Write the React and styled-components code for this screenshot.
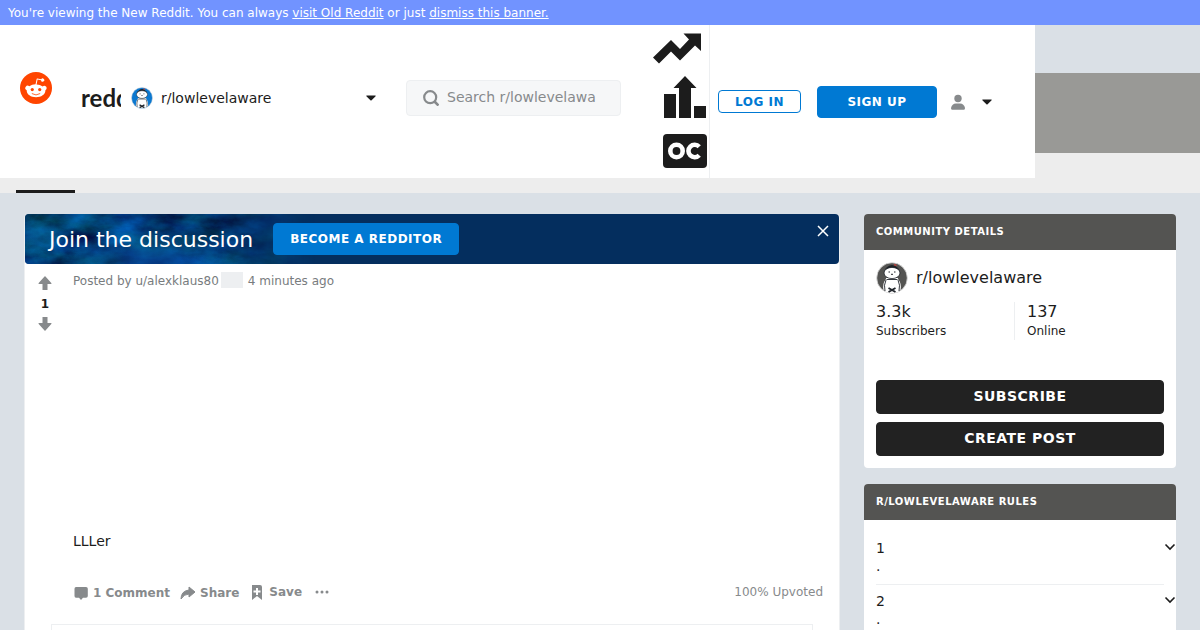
import React from "react";
import styled, { createGlobalStyle } from "styled-components";

const Global = createGlobalStyle`
  *, *::before, *::after { box-sizing: border-box; }
  body {
    margin: 0;
    background: #dae0e6;
    color: #1c1c1c;
    font-family: "DejaVu Sans", Verdana, sans-serif;
    font-size: 14px;
    line-height: 18px;
  }
  h1, h2, p, ol { margin: 0; padding: 0; font-weight: 400; }
  button, input { font-family: inherit; }
  button { cursor: pointer; }
`;

const Page = styled.div`
  height: 100vh;
  overflow: hidden;
`;

const Notice = styled.div`
  background: #7193ff;
  color: #fff;
  font-size: 12px;
  line-height: 17px;
  padding: 5px 8px 3px;
  a { color: inherit; }
`;

const Masthead = styled.div`
  display: grid;
  > * { grid-area: 1 / 1; }
`;

const Backdrop = styled.div`
  padding-top: 48px;
`;

const CoverBand = styled.div`
  height: 80px;
  background: #999996;
`;

const TabBand = styled.nav`
  display: flex;
  align-items: flex-end;
  height: 40px;
  padding: 0 16px;
  background: #ededed;
`;

const ActiveTab = styled.span`
  width: 59px;
  height: 3px;
  background: #1c1c1c;
`;

const Header = styled.header`
  z-index: 1;
  justify-self: start;
  align-self: start;
  display: flex;
  align-items: stretch;
  padding-right: 43px;
  background: #fff;
`;

const Brand = styled.a`
  display: flex;
  align-items: center;
  gap: 29px;
  padding-left: 20px;
  padding-bottom: 8px;
  text-decoration: none;
  svg { display: block; }
`;

const BrandFace = styled.svg`
  margin-bottom: 20px;
`;

const Wordmark = styled.span`
  width: 40px;
  overflow: hidden;
  color: #1c1c1c;
  font-family: Lato, sans-serif;
  font-size: 24px;
  font-weight: 700;
  line-height: 28px;
  white-space: nowrap;
`;

const CommunityMenu = styled.button`
  display: flex;
  align-items: center;
  gap: 8px;
  width: 246px;
  margin: 0 30px 7px 9px;
  padding: 0 0 0 1px;
  border: 0;
  background: none;
  color: inherit;
  font-size: 14px;
  line-height: 18px;
  svg { flex: none; }
  span { flex: 1; text-align: left; }
`;

const SearchBox = styled.form`
  align-self: center;
  display: flex;
  align-items: center;
  gap: 8px;
  width: 215px;
  height: 36px;
  margin-bottom: 8px;
  padding: 0 16px;
  border: 1px solid #edeff1;
  border-radius: 4px;
  background: #f6f7f8;
  svg { flex: none; }
`;

const SearchInput = styled.input`
  flex: none;
  width: 156px;
  height: 32px;
  padding: 0 0 2px;
  border: 0;
  outline: 0;
  background: transparent;
  color: #1c1c1c;
  font-size: 14px;
  &::placeholder { color: #878a8c; opacity: 1; }
`;

const Shortcuts = styled.nav`
  display: flex;
  flex-direction: column;
  align-items: flex-end;
  width: 89px;
  padding: 8px 2px 10px 0;
  border-right: 1px solid #edeff1;
  a { display: block; color: #1c1c1c; }
  a:nth-child(1) { margin-right: 6px; }
  svg { display: block; }
`;

const ChartLink = styled.a`
  margin: 12px 1px 16px 0;
`;

const Account = styled.div`
  display: flex;
  align-items: center;
  gap: 16px;
  padding-left: 8px;
`;

const Button = styled.button`
  display: block;
  width: ${(p) => p.$width || "auto"};
  height: ${(p) => p.$height || "32px"};
  padding: 0 16px;
  border: 1px solid ${(p) => p.$line || p.$fill};
  border-radius: 4px;
  background: ${(p) => p.$fill};
  color: ${(p) => p.$ink || "#fff"};
  font-size: 12px;
  font-weight: 700;
  letter-spacing: 0.5px;
  line-height: 16px;
  text-transform: uppercase;
  white-space: nowrap;
`;

const WideButton = styled(Button)`
  height: 34px;
  padding-bottom: 2px;
  font-size: 14px;
`;

const UserMenu = styled.button`
  display: flex;
  align-items: center;
  gap: 16px;
  margin-left: -3px;
  padding: 0;
  border: 0;
  background: none;
  svg { display: block; }
`;

const Columns = styled.div`
  display: grid;
  grid-template-columns: minmax(0, 1fr) 312px;
  gap: 24px;
  align-items: start;
  padding: 20px 24px;
`;

const PostCard = styled.main`
  min-height: 480px;
  border: 1px solid #edeff1;
  border-top-color: transparent;
  border-radius: 5px;
  background: #fff;
  background-clip: padding-box;
`;

const JoinBanner = styled.section`
  position: relative;
  display: flex;
  align-items: center;
  gap: 20px;
  height: 50px;
  padding: 0 10px 0 24px;
  border-radius: 4px;
  color: #fff;
  background: #042e5e;
  overflow: hidden;
  > h2, > button { position: relative; }
  h2 { padding-top: 2px; font-size: 22px; line-height: 26px; }
`;

const Nebula = styled.svg`
  position: absolute;
  top: 0;
  left: 0;
`;

const CloseButton = styled.button`
  margin: 0 0 16px auto;
  padding: 0;
  border: 0;
  background: none;
  svg { display: block; }
`;

const PostBody = styled.div`
  display: grid;
  grid-template-columns: 40px minmax(0, 1fr);
`;

const Votes = styled.div`
  display: flex;
  flex-direction: column;
  align-items: center;
  padding-top: 12px;
  color: #1c1c1c;
  font-size: 12px;
  font-weight: 700;
  line-height: 16px;
  gap: 5px;
  span { padding-top: 1px; }
`;

const VoteButton = styled.button`
  padding: 0;
  border: 0;
  background: none;
  svg { display: block; }
`;

const PostMain = styled.article`
  padding: 9px 16px 0 8px;
`;

const Byline = styled.p`
  display: flex;
  color: #787c7e;
  font-size: 12px;
  line-height: 17px;
`;

const Flair = styled.span`
  width: 22px;
  height: 16px;
  margin: -1px 5px 0 2px;
  background: #edeff1;
`;

const PostText = styled.p`
  padding-top: 242px;
  font-size: 14px;
  line-height: 18px;
`;

const ActionRow = styled.div`
  display: flex;
  align-items: center;
  gap: 10px;
  margin-top: 31px;
  color: #878a8c;
  font-size: 12px;
  line-height: 20px;
`;

const Action = styled.button`
  display: flex;
  align-items: center;
  gap: 4px;
  padding: ${(p) => (p.$low ? "2px 0 0" : "0")};
  border: 0;
  background: none;
  color: inherit;
  font-size: 12px;
  font-weight: 700;
  line-height: 20px;
  svg { display: block; }
`;

const Upvoted = styled.span`
  margin-left: auto;
`;

const CommentFrame = styled.section`
  height: 60px;
  margin: 21px 26px 0;
  border: 1px solid #edeff1;
`;

const Sidebar = styled.aside`
  display: grid;
  gap: 16px;
  padding-top: 1px;
`;

const Widget = styled.section`
  overflow: hidden;
  border-radius: 4px;
  background: #fff;
  > h2 {
    padding: 9px 12px;
    background: #545452;
    color: #fff;
    font-size: 10px;
    font-weight: 700;
    letter-spacing: 0.5px;
    line-height: 18px;
    text-transform: uppercase;
  }
`;

const Details = styled.div`
  display: grid;
  gap: 8px;
  padding: 12px;
`;

const CommunityName = styled.a`
  display: flex;
  align-items: center;
  gap: 8px;
  color: inherit;
  font-size: 16px;
  line-height: 20px;
  text-decoration: none;
`;

const Stats = styled.div`
  display: grid;
  grid-template-columns: 139px 1fr;
  column-gap: 12px;
  margin-bottom: 32px;
`;

const Stat = styled.p`
  border-right: ${(p) => (p.$divided ? "1px solid #edeff1" : "0")};
  font-size: 12px;
  line-height: 18px;
  strong {
    display: block;
    font-size: 16px;
    font-weight: 400;
    line-height: 20px;
  }
`;

const Rules = styled.ol`
  padding: 12px 0 0 12px;
  list-style: none;
`;

const Rule = styled.li`
  display: flex;
  justify-content: space-between;
  height: 53px;
  margin-right: 12px;
  padding-top: 7px;
  border-bottom: 1px solid #edeff1;
  span { width: 10px; overflow-wrap: anywhere; }
`;

const RuleToggle = styled.button`
  align-self: flex-start;
  margin: 4px -12px 0 0;
  padding: 0;
  border: 0;
  background: none;
  svg { display: block; }
`;

const Caret = () => (
  <svg width="10" height="6" viewBox="0 0 10 6" aria-hidden="true">
    <path d="M.5.5h9Q10 1 9.400 1.500L5.600 5.200Q5 5.800 4.400 5.200L.6 1.500Q0 1 .5.5z" fill="#1c1c1c" />
  </svg>
);

const Penguin = ({ size, color }) => (
  <svg width={size} height={size} viewBox="0 0 32 32" aria-hidden="true">
    <circle cx="16" cy="16" r="15.300" fill={color} stroke="#ddd" strokeWidth=".8" />
    <path d="M10 6q6-6 12 0l2 3H8z" fill="#1c2026" />
    <path d="M10 17q-4 5-2.500 11l3 1.500zM22 17q4 5 2.500 11l-3 1.500z" fill="#fff" />
    <path d="M10 16h12l1 13.500q-7 3-14 0z" fill="#fff" />
    <ellipse cx="16" cy="11" rx="8" ry="5.600" fill="#fff" stroke="#20252b" strokeWidth=".8" />
    <path d="M10.500 17.500h11M10 18q-2.500 5-1 11M22 18q2.500 5 1 11" fill="none" stroke="#20252b" strokeWidth=".9" />
    <path d="M12.500 26l7 4M19.500 26l-7 4" stroke="#20252b" strokeWidth="1.800" />
    <path d="M12.500 10h1.500M18 10h1.500M15 12.300h2" stroke="#20252b" strokeWidth="1" />
    <path d="M18 2.500l2.500 1" stroke="#b5413c" strokeWidth="1.500" />
  </svg>
);

const Snoo = () => (
  <BrandFace width="32" height="32" viewBox="0 0 20 20" aria-hidden="true">
    <circle cx="10" cy="10" r="10" fill="#ff4500" />
    <path
      fill="#fff"
      d="M16.670 10a1.460 1.460 0 0 0-2.470-1 7.120 7.120 0 0 0-3.850-1.230L11 4.650l2.140.450a1 1 0 1 0 .130-.610L10.820 4a.310.310 0 0 0-.370.240L9.710 7.710a7.140 7.140 0 0 0-3.900 1.230 1.460 1.460 0 1 0-1.610 2.390 2.870 2.870 0 0 0 0 .440c0 2.240 2.610 4.060 5.830 4.060s5.830-1.820 5.830-4.060a2.870 2.870 0 0 0 0-.440 1.460 1.460 0 0 0 .810-1.330z"
    />
    <circle cx="7.670" cy="11" r="1" fill="#ff4500" />
    <circle cx="12.330" cy="11" r="1" fill="#ff4500" />
    <path d="M7.600 13.600q2.400 1.600 4.800 0" fill="none" stroke="#ff4500" strokeWidth=".5" strokeLinecap="round" />
  </BrandFace>
);

const NebulaArt = () => (
  <Nebula width="290" height="50" viewBox="0 0 290 50" aria-hidden="true">
    <defs>
      <filter id="grain" x="0" y="0" width="100%" height="100%" colorInterpolationFilters="sRGB">
        <feTurbulence type="fractalNoise" baseFrequency=".025 .05" numOctaves="6" seed="8" />
        <feColorMatrix values="0 0 0 0 0  0 .8 0 0 -.13  0 .9 .5 0 -.2  0 0 0 0 1" />
      </filter>
      <linearGradient id="fade">
        <stop offset="0" stopColor="#fff" stopOpacity=".7" />
        <stop offset=".65" stopColor="#fff" stopOpacity=".6" />
        <stop offset="1" stopColor="#fff" stopOpacity="0" />
      </linearGradient>
      <radialGradient id="glow">
        <stop offset="0" stopColor="#0862b4" />
        <stop offset="1" stopColor="#0862b4" stopOpacity="0" />
      </radialGradient>
      <mask id="edge"><rect width="290" height="50" fill="url(#fade)" /></mask>
    </defs>
    <rect width="290" height="50" filter="url(#grain)" mask="url(#edge)" />
    <ellipse cx="125" cy="44" rx="85" ry="28" fill="url(#glow)" opacity=".6" />
    <ellipse cx="8" cy="22" rx="36" ry="18" fill="url(#glow)" opacity=".4" />
  </Nebula>
);

const VoteArrow = ({ down }) => (
  <svg width="14" height="14" viewBox="0 0 14 14" aria-hidden="true">
    <path d={down ? "M4.500 0h5v6H13q1 .2.300 1L7.500 13.500q-.5.500-1 0L.7 7Q0 6.200 1 6h3.500z" : "M4.500 14h5V8H13q1-.2.300-1L7.500.5q-.5-.5-1 0L.7 7Q0 7.800 1 8h3.500z"} fill="#878a8c" />
  </svg>
);

const rules = [1, 2, 3];

export default function App() {
  return (
    <Page>
      <Global />
      <Notice>
        You're viewing the New Reddit. You can always <a href="#old">visit Old Reddit</a> or just{" "}
        <a href="#dismiss">dismiss this banner.</a>
      </Notice>
      <Masthead>
        <Backdrop>
          <CoverBand />
          <TabBand aria-label="Community">
            <ActiveTab />
          </TabBand>
        </Backdrop>
        <Header>
          <Brand href="#home">
            <Snoo />
            <Wordmark>reddit</Wordmark>
          </Brand>
          <CommunityMenu>
            <Penguin size={22} color="#0b78d0" />
            <span>r/lowlevelaware</span>
            <Caret />
          </CommunityMenu>
          <SearchBox role="search">
            <svg width="16" height="16" viewBox="0 0 16 16" aria-hidden="true" fill="none" stroke="#878a8c" strokeWidth="2.200">
              <circle cx="7.200" cy="7.200" r="6" />
              <path d="M11.500 11.500l4 4" strokeWidth="2.600" />
            </svg>
            <SearchInput type="text" aria-label="Search" placeholder="Search r/lowlevelawa" />
          </SearchBox>
          <Shortcuts aria-label="Shortcuts">
            <a href="#popular" aria-label="Popular">
              <svg width="48" height="31" viewBox="0 0 48 31" aria-hidden="true">
                <path d="M30.500.5H48V18l-6-5.500L27 27.500l-9-9L6 30.500 0 24.500 18 7l9 9 9-9.500z" fill="#1c1c1c" />
              </svg>
            </a>
            <ChartLink href="#all" aria-label="All">
              <svg width="42" height="42" viewBox="0 0 42 42" aria-hidden="true">
                <path d="M0 18h12v24H0zM15 12H9.500L21 0l11.500 12H27v30H15zM30 30h12v12H30z" fill="#1c1c1c" />
              </svg>
            </ChartLink>
            <a href="#oc" aria-label="Original content">
              <svg width="44" height="34" viewBox="0 0 44 34" aria-hidden="true">
                <rect width="44" height="34" rx="4" fill="#1c1c1c" />
                <circle cx="13.500" cy="17" r="6.200" fill="none" stroke="#fff" strokeWidth="4.600" />
                <path d="M36.200 12.800a6.200 6.200 0 1 0 0 8.400" fill="none" stroke="#fff" strokeWidth="4.600" />
              </svg>
            </a>
          </Shortcuts>
          <Account>
            <Button $width="83px" $height="23px" $fill="#fff" $line="#0079d3" $ink="#0079d3">Log in</Button>
            <Button $width="120px" $fill="#0079d3">Sign up</Button>
            <UserMenu aria-label="User menu">
              <svg width="16" height="16" viewBox="0 0 16 16" aria-hidden="true" fill="#878a8c">
                <circle cx="8" cy="4.500" r="3.700" />
                <path d="M1 14q1-4.500 5-4.500h4q4 0 5 4.500 0 1.800-1 1.800H2Q1 15.800 1 14z" />
              </svg>
              <Caret />
            </UserMenu>
          </Account>
        </Header>
      </Masthead>
      <Columns>
        <PostCard>
          <JoinBanner>
            <NebulaArt />
            <h2>Join the discussion</h2>
            <Button $width="186px" $fill="#0079d3">Become a Redditor</Button>
            <CloseButton aria-label="Close">
              <svg width="12" height="12" viewBox="0 0 12 12" aria-hidden="true">
                <path d="M1 1l10 10M11 1L1 11" stroke="#fff" strokeWidth="1.500" />
              </svg>
            </CloseButton>
          </JoinBanner>
          <PostBody>
            <Votes>
              <VoteButton aria-label="Upvote"><VoteArrow /></VoteButton>
              <span>1</span>
              <VoteButton aria-label="Downvote"><VoteArrow down /></VoteButton>
            </Votes>
            <PostMain>
              <Byline>
                Posted by u/alexklaus80 <Flair /> 4 minutes ago
              </Byline>
              <PostText>LLLer</PostText>
              <ActionRow>
                <Action $low>
                  <svg width="16" height="14" viewBox="0 0 16 14" aria-hidden="true">
                    <path d="M3 1h10q1.800 0 1.800 1.800V10q0 1.800-1.800 1.800h-3L8 14l-2-2.200H3q-1.500 0-1.500-1.800V2.800Q1.500 1 3 1z" fill="#878a8c" />
                  </svg>
                  1 Comment
                </Action>
                <Action $low>
                  <svg width="16" height="14" viewBox="0 0 16 14" aria-hidden="true">
                    <path d="M9 1l6 5-6 5V8Q4 8 1 13q0-8 8-9z" fill="#878a8c" stroke="#878a8c" strokeLinejoin="round" />
                  </svg>
                  Share
                </Action>
                <Action>
                  <svg width="16" height="16" viewBox="0 0 16 16" aria-hidden="true">
                    <path d="M3 1h8q2 0 2 2v13l-5-4-5 4z" fill="#878a8c" />
                    <path d="M8 4v7M4.500 7.500h7" stroke="#fff" strokeWidth="2" />
                  </svg>
                  Save
                </Action>
                <Action aria-label="More">
                  <svg width="20" height="4" viewBox="0 0 20 4" aria-hidden="true" fill="#878a8c">
                    <circle cx="5" cy="2" r="1.500" /><circle cx="10" cy="2" r="1.500" /><circle cx="15" cy="2" r="1.500" />
                  </svg>
                </Action>
                <Upvoted>100% Upvoted</Upvoted>
              </ActionRow>
            </PostMain>
          </PostBody>
          <CommentFrame />
        </PostCard>
        <Sidebar>
          <Widget>
            <h2>Community details</h2>
            <Details>
              <CommunityName href="#community">
                <Penguin size={32} color="#545452" />
                r/lowlevelaware
              </CommunityName>
              <Stats>
                <Stat $divided><strong>3.3k</strong>Subscribers</Stat>
                <Stat><strong>137</strong>Online</Stat>
              </Stats>
              <WideButton $fill="#222">Subscribe</WideButton>
              <WideButton $fill="#222">Create post</WideButton>
            </Details>
          </Widget>
          <Widget>
            <h2>r/lowlevelaware Rules</h2>
            <Rules>
              {rules.map((n) => (
                <Rule key={n}>
                  <span>{n}.</span>
                  <RuleToggle aria-label={`Show rule ${n}`}>
                    <svg width="12" height="8" viewBox="0 0 12 8" aria-hidden="true">
                      <path d="M1.500 1.500L6 6l4.500-4.500" fill="none" stroke="#1c1c1c" strokeWidth="1.600" />
                    </svg>
                  </RuleToggle>
                </Rule>
              ))}
            </Rules>
          </Widget>
        </Sidebar>
      </Columns>
    </Page>
  );
}
